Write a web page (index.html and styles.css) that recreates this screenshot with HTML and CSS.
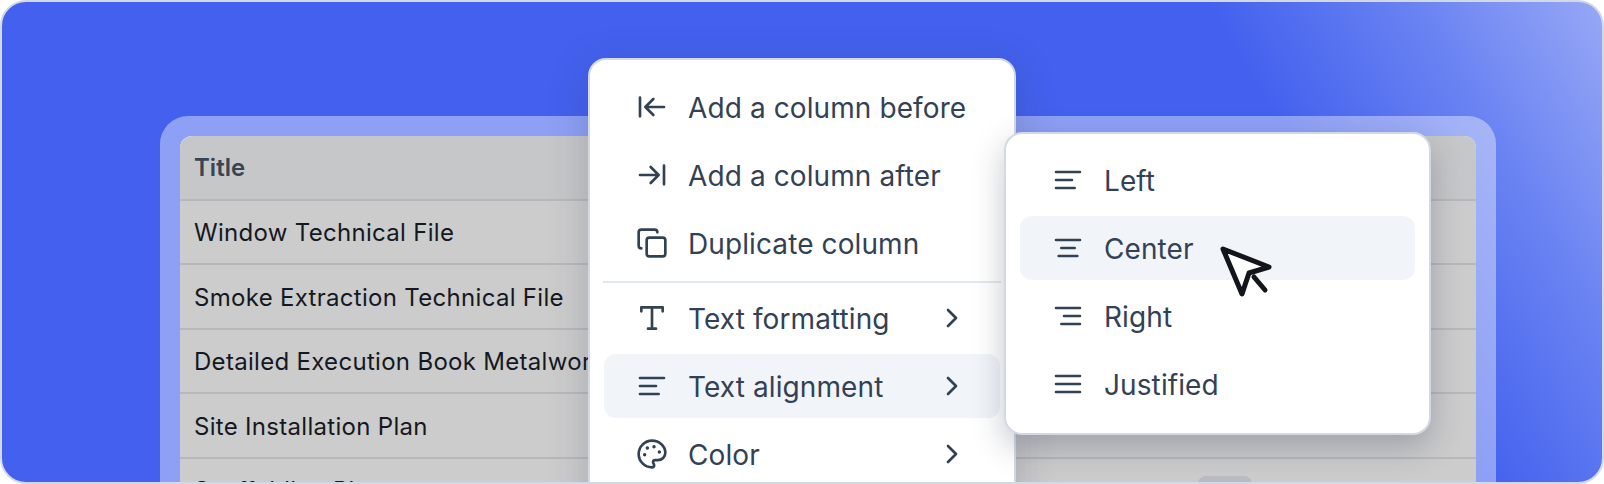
FILE: index.html
```html
<!DOCTYPE html>
<html lang="en">
<head>
    <meta charset="UTF-8">
    <title>Table column menu</title>
    <link rel="stylesheet" href="styles.css">
</head>
<body>
    <div class="card">
        <div class="frame">
            <div class="table">
                <div class="row head"><span>Title</span></div>
                <div class="row"><span>Window Technical File</span></div>
                <div class="row"><span>Smoke Extraction Technical File</span></div>
                <div class="row"><span>Detailed Execution Book Metalwork</span></div>
                <div class="row"><span>Site Installation Plan</span></div>
                <div class="row"><span>Scaffolding Plan</span><span class="badge">N/A</span></div>
            </div>
            <div class="dim"></div>
        </div>

        <div class="menu main-menu">
            <div class="item">
                <svg class="icon" viewBox="0 0 24 24"><path d="M3 19V5M13 6l-6 6 6 6M7 12h14"/></svg>
                <span class="label">Add a column before</span>
            </div>
            <div class="item">
                <svg class="icon" viewBox="0 0 24 24"><path d="M17 12H3M11 18l6-6-6-6M21 5v14"/></svg>
                <span class="label">Add a column after</span>
            </div>
            <div class="item">
                <svg class="icon" viewBox="0 0 24 24"><rect x="8" y="8" width="14" height="14" rx="2"/><path d="M4 16c-1.1 0-2-.9-2-2V4c0-1.1.9-2 2-2h10c1.1 0 2 .9 2 2"/></svg>
                <span class="label">Duplicate column</span>
            </div>
            <div class="sep"></div>
            <div class="item">
                <svg class="icon" viewBox="0 0 24 24"><path d="M4 7V4h16v3M9 20h6M12 4v16"/></svg>
                <span class="label">Text formatting</span>
                <svg class="icon chevron" viewBox="0 0 24 24"><path d="m9 18 6-6-6-6"/></svg>
            </div>
            <div class="item active">
                <svg class="icon" viewBox="0 0 24 24"><path d="M3 6h18M3 12h12M3 18h14"/></svg>
                <span class="label">Text alignment</span>
                <svg class="icon chevron" viewBox="0 0 24 24"><path d="m9 18 6-6-6-6"/></svg>
            </div>
            <div class="item">
                <svg class="icon" viewBox="0 0 24 24"><path d="M12 2C6.5 2 2 6.5 2 12s4.500 10 10 10c.9 0 1.600-.7 1.600-1.600 0-.4-.2-.8-.4-1.100-.3-.3-.4-.6-.4-1.100 0-.9.700-1.600 1.600-1.600h2c3.100 0 5.600-2.500 5.600-5.600C22 6 17.500 2 12 2z"/><circle class="dot" cx="13.500" cy="6.500" r=".8"/><circle class="dot" cx="17.500" cy="10.500" r=".8"/><circle class="dot" cx="8.500" cy="7.500" r=".8"/><circle class="dot" cx="6.500" cy="12.500" r=".8"/></svg>
                <span class="label">Color</span>
                <svg class="icon chevron" viewBox="0 0 24 24"><path d="m9 18 6-6-6-6"/></svg>
            </div>
        </div>

        <div class="menu sub-menu">
            <div class="item">
                <svg class="icon" viewBox="0 0 24 24"><path d="M3 6h18M3 12h12M3 18h14"/></svg>
                <span class="label">Left</span>
            </div>
            <div class="item active">
                <svg class="icon" viewBox="0 0 24 24"><path d="M3 6h18M7 12h10M5 18h14"/></svg>
                <span class="label">Center</span>
            </div>
            <div class="item">
                <svg class="icon" viewBox="0 0 24 24"><path d="M3 6h18M9 12h12M7 18h14"/></svg>
                <span class="label">Right</span>
            </div>
            <div class="item">
                <svg class="icon" viewBox="0 0 24 24"><path d="M3 6h18M3 12h18M3 18h18"/></svg>
                <span class="label">Justified</span>
            </div>
        </div>

        <svg class="pointer" viewBox="0 0 58 56">
            <path d="M6 6 52 24 32 30 25 51Z"/>
            <path d="M37 34 48 47"/>
        </svg>
    </div>
</body>
</html>
```

FILE: styles.css
```css
* {
    margin: 0;
    padding: 0;
    box-sizing: border-box;
}

body {
    background: #fff;
    font-family: 'Inter', sans-serif;
    overflow: hidden;
}

.card {
    position: relative;
    width: 1604px;
    height: 484px;
    overflow: hidden;
    border: 2px solid #d3d9e4;
    border-radius: 26px;
    padding: 114px 106px 0 158px;
    background: linear-gradient(60deg, #4361ee 0%, #4361ee 79%, #6a83f2 90%, #97a8f6 100%);
}

.frame {
    position: relative;
    height: 400px;
    padding: 20px 20px 0;
    border-radius: 28px 28px 0 0;
    background: rgba(255, 255, 255, 0.4);
}

.table {
    height: 380px;
    overflow: hidden;
    background: #fff;
    border-radius: 12px 12px 0 0;
}

/* grey veil over the table */
.dim {
    position: absolute;
    top: 20px;
    left: 20px;
    right: 20px;
    bottom: 0;
    background: rgba(0, 0, 0, 0.2);
    border-radius: 12px 12px 0 0;
}

.row {
    display: grid;
    grid-template-columns: 1fr 278px;
    align-items: center;
    height: 64.5px;
    padding: 2px 0 0 14px;
    font-size: 24px;
    letter-spacing: 0.3px;
    color: #1a1f2b;
    border-bottom: 2px solid #e6e7ec;
}

.row.head {
    padding-top: 0;
    font-weight: 600;
    letter-spacing: 0;
    color: #475569;
    background: #f8f9fb;
}

.badge {
    justify-self: start;
    width: 54px;
    height: 30px;
    line-height: 30px;
    text-align: center;
    font-size: 18px;
    color: #4a5568;
    background: #eaecf0;
    border-radius: 8px;
}

.menu {
    position: absolute;
    display: flex;
    flex-direction: column;
    gap: 4px;
    background: #fff;
    border: 2px solid #d3d9e4;
    border-radius: 18px;
}

.main-menu {
    left: 586px;
    top: 56px;
    width: 428px;
    height: 460px;
    padding: 15px 14px;
    box-shadow: 0 10px 40px rgba(40, 50, 80, 0.22);
}

.sub-menu {
    left: 1002px;
    top: 130px;
    width: 427px;
    height: 303px;
    padding: 14px;
    box-shadow: 0 12px 32px rgba(30, 40, 70, 0.26);
}

.item {
    display: flex;
    align-items: center;
    gap: 20px;
    flex: none;
    height: 64px;
    padding: 0 32px;
    border-radius: 12px;
    color: #334155;
    font-size: 28px;
    letter-spacing: 0.1px;
}

.item.active {
    background: #f1f5f9;
}

.label {
    flex: 1;
    padding-top: 2px;
    white-space: nowrap;
}

.sep {
    flex: none;
    height: 2px;
    margin: 2px -1px -1px;
    background: #e2e8f0;
}

.icon {
    flex: none;
    width: 32px;
    height: 32px;
    fill: none;
    stroke: #334155;
    stroke-width: 2;
    stroke-linecap: round;
    stroke-linejoin: round;
}

.icon .dot {
    fill: #334155;
    stroke-width: 1;
}

.pointer {
    position: absolute;
    left: 1215px;
    top: 241px;
    width: 58px;
    height: 56px;
    fill: #fff;
    stroke: #12151c;
    stroke-width: 5;
    stroke-linecap: round;
    stroke-linejoin: round;
}
```
